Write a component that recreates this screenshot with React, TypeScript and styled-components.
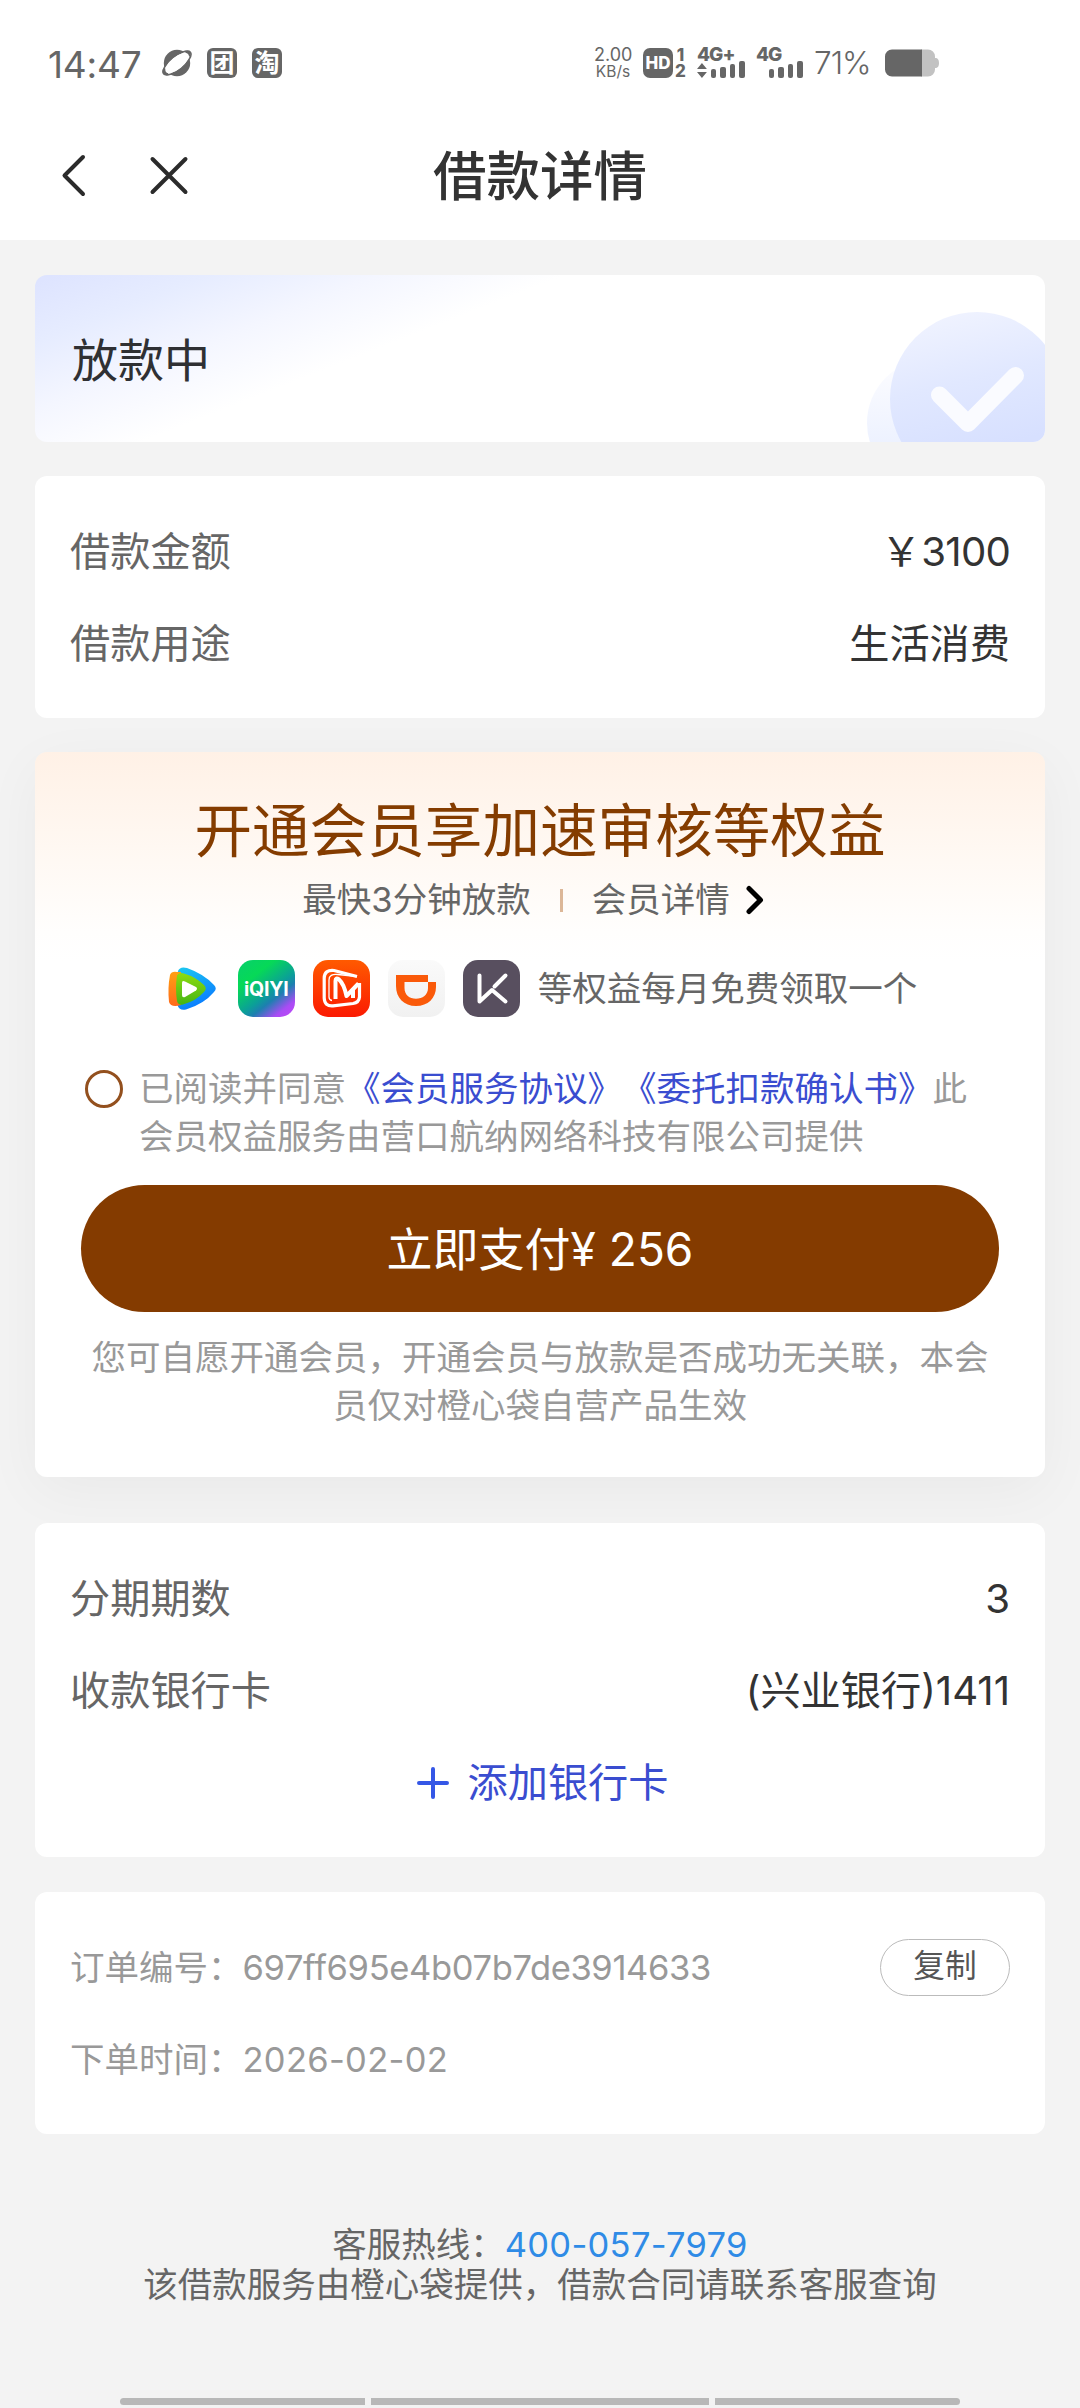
import React from "react";
import styled, { createGlobalStyle } from "styled-components";

const GlobalStyle = createGlobalStyle`
  * { box-sizing: border-box; }
  body {
    margin: 0;
    background: #f3f3f3;
    color: #333;
    font-family: Inter, "Noto Sans CJK SC", sans-serif;
    text-spacing-trim: space-all;
  }
`;

const Screen = styled.div`
  width: 1080px;
  height: 2408px;
  display: flex;
  flex-direction: column;
  overflow: hidden;
`;

const Header = styled.header`
  height: 240px;
  flex: none;
  background: #fff;
`;

const StatusBar = styled.div`
  height: 126px;
  padding: 0 141px 0 48px;
  display: flex;
  align-items: center;
  justify-content: space-between;
  color: #666;
`;

const StatusGroup = styled.div<{ $gap: number }>`
  display: flex;
  align-items: center;
  gap: ${(p) => p.$gap}px;
`;

const Clock = styled.span`
  width: 99px;
  font-size: 37px;
  line-height: 44px;
  letter-spacing: -0.2px;
  padding-top: 4px;
  white-space: nowrap;
`;

const AppBadge = styled.span`
  width: 30px;
  height: 30px;
  border-radius: 6px;
  background: #666;
  color: #fff;
  display: flex;
  align-items: center;
  justify-content: center;
  font-size: 25px;
  line-height: 30px;
  font-weight: 700;
`;

const NetSpeed = styled.div`
  width: 38px;
  text-align: center;
  display: flex;
  flex-direction: column;
  font-size: 18px;
  line-height: 17px;
  white-space: nowrap;

  span + span {
    font-size: 15.5px;
  }
`;

const HdMark = styled.div`
  display: flex;
  align-items: center;
  gap: 2px;
`;

const HdBox = styled.span`
  width: 30px;
  height: 30px;
  border-radius: 7px;
  background: #666;
  color: #fff;
  font-size: 17px;
  font-weight: 800;
  line-height: 30px;
  text-align: center;
`;

const HdSlots = styled.span`
  width: 11px;
  display: flex;
  flex-direction: column;
  font-size: 17px;
  line-height: 16px;
  font-weight: 800;
  text-align: center;
`;

const Signal = styled.div<{ $width: number }>`
  width: ${(p) => p.$width}px;
  height: 30px;
  display: flex;
  flex-direction: column;
  justify-content: space-between;
  font-size: 19px;
  line-height: 14px;
  font-weight: 800;
  letter-spacing: -1px;
`;

const SignalBars = styled.div`
  display: flex;
  align-items: flex-end;
  justify-content: flex-end;
  gap: 4px;
  height: 17px;
  margin-top: -3px;
`;

const Bar = styled.i<{ $h: number }>`
  width: 5.6px;
  height: ${(p) => p.$h}px;
  border-radius: 2px;
  background: #666;
`;

const Percent = styled.span`
  width: 60px;
  font-size: 31.5px;
  line-height: 30px;
  letter-spacing: -1px;
  font-weight: 300;
`;

const NavBar = styled.nav`
  height: 98px;
  padding: 0 58px;
  display: grid;
  grid-template-columns: 1fr auto 1fr;
  align-items: center;
`;

const NavButtons = styled.div`
  display: flex;
  align-items: center;
  gap: 58px;
`;

const IconButton = styled.button`
  border: 0;
  padding: 0;
  background: none;
  display: flex;
`;

const PageTitle = styled.h1`
  margin: 4px 0 0;
  font-size: 53.5px;
  line-height: 70px;
  font-weight: 500;
  color: #333;
`;

const Content = styled.main`
  padding: 35px 35px 0;
  display: flex;
  flex-direction: column;
`;

const Card = styled.section<{ $top?: number }>`
  margin-top: ${(p) => p.$top ?? 0}px;
  padding: 29px 35px;
  border-radius: 12px;
  background: #fff;
`;

const StatusCard = styled.section`
  height: 167px;
  border-radius: 12px;
  overflow: hidden;
  background: linear-gradient(158.5deg, #dde3ff 0%, #e6ecff 12%, #f4f6ff 24%, #fff 37%);
  display: flex;
  align-items: stretch;
  justify-content: space-between;
`;

const StatusText = styled.h2`
  margin: 0;
  padding: 0 0 0 37px;
  font-size: 46px;
  line-height: 170px;
  font-weight: 400;
  color: #2f3033;
`;

const Row = styled.div<{ $center?: boolean }>`
  height: 92px;
  padding-top: 1px;
  display: flex;
  align-items: center;
  justify-content: ${(p) => (p.$center ? "center" : "space-between")};
  font-size: 40.2px;
  line-height: 56px;
`;

const Label = styled.span`
  color: #666;
`;

const Value = styled.span`
  color: #333;
`;

const Digits = styled.span`
  letter-spacing: -0.8px;
`;

const AddCard = styled.button`
  border: 0;
  padding: 0 0 0 5px;
  background: none;
  display: flex;
  align-items: center;
  gap: 19px;
  font: inherit;
  color: #3a4dd0;
`;

const MemberCard = styled.section`
  margin-top: 34px;
  height: 725px;
  padding: 44px 46px 0;
  border-radius: 12px;
  background: linear-gradient(180deg, #fff1e6 0, #fff8f2 95px, #fffefd 180px, #fff 210px);
  box-shadow: 0 14px 58px rgba(0, 0, 0, 0.045);
  display: flex;
  flex-direction: column;
`;

const MemberTitle = styled.h2`
  margin: 0;
  font-size: 57.6px;
  line-height: 70px;
  font-weight: 400;
  color: #843c00;
  text-align: center;
`;

const MemberSub = styled.div`
  margin: 14px 0 0 -13px;
  display: flex;
  align-items: center;
  justify-content: center;
  font-size: 34.5px;
  line-height: 40px;
  color: #666;
`;

const Divider = styled.i`
  width: 3px;
  height: 23px;
  margin: 0 29px;
  background: #dcb798;
`;

const MoreLink = styled.a`
  display: flex;
  align-items: center;
  gap: 15px;
`;

const Benefits = styled.div`
  margin-top: 40px;
  height: 57px;
  display: flex;
  align-items: center;
  justify-content: center;
  gap: 18px;
  font-size: 34.5px;
  line-height: 40px;
  color: #666;
`;

const BenefitIcon = styled.span<{ $bg?: string }>`
  width: 57px;
  height: 57px;
  flex: none;
  border-radius: 15px;
  background: ${(p) => p.$bg ?? "transparent"};
  display: flex;
  align-items: center;
  justify-content: center;
  overflow: hidden;
`;

const IqiyiText = styled.span`
  color: #fff;
  font-size: 19.5px;
  font-weight: 700;
  line-height: 24px;
  letter-spacing: -0.2px;
`;

const Agreement = styled.div`
  margin: 48px 0 0 4px;
  display: flex;
  gap: 16px;
`;

const Radio = styled.span`
  width: 38px;
  height: 38px;
  flex: none;
  margin-top: 5px;
  border: 3px solid #93501e;
  border-radius: 50%;
`;

const AgreementText = styled.p`
  margin: 0;
  font-size: 34.5px;
  line-height: 48px;
  color: #999;

  a {
    color: #3a4dd0;
  }
`;

const PayButton = styled.button`
  margin-top: 24px;
  height: 127px;
  flex: none;
  border: 0;
  border-radius: 64px;
  background: #843b00;
  color: #fff;
  font-family: inherit;
  font-size: 46px;
  line-height: 60px;
`;

const Notice = styled.p`
  margin: 22px 0 0;
  font-size: 34.5px;
  line-height: 48px;
  color: #999;
  text-align: center;
`;

const OrderInfo = styled.span`
  font-size: 34.5px;
  color: #999;
`;

const OrderValue = styled.span<{ $spacing: number }>`
  letter-spacing: ${(p) => p.$spacing}px;
`;

const CopyButton = styled.button`
  width: 130px;
  height: 57px;
  padding: 0 0 3px;
  border: 1.5px solid #bbb;
  border-radius: 29px;
  background: #fff;
  font-family: inherit;
  font-size: 31.7px;
  line-height: 40px;
  color: #555;
`;

const Footer = styled.footer`
  margin-top: 91px;
  font-size: 34.5px;
  line-height: 40px;
  color: #666;
  text-align: center;
  white-space: nowrap;

  a {
    color: #2f8be6;
    letter-spacing: 0.3px;
  }
`;

const GestureBar = styled.div`
  margin: auto 120px 3px;
  display: grid;
  grid-template-columns: 245px 338px 245px;
  justify-content: space-between;
`;

const Grip = styled.i<{ $radius: string }>`
  height: 7px;
  border-radius: ${(p) => p.$radius};
  background: #b8b8b8;
`;

function PlanetIcon() {
  return (
    <svg width="30" height="30" viewBox="0 0 30 30">
      <circle cx="15" cy="15" r="13.2" fill="#666" />
      <ellipse cx="15" cy="15" rx="17.2" ry="6.6" transform="rotate(-39 15 15)" fill="#fff" stroke="#666" strokeWidth="1.6" />
      <path d="M1 21C0 25 1 28 7 27L3 20ZM22 3C27 2 30 3 28 9Z" fill="#666" />
      <ellipse cx="15" cy="15" rx="14.2" ry="6" transform="rotate(-39 15 15)" fill="#fff" />
    </svg>
  );
}

function BatteryIcon() {
  return (
    <svg width="54" height="28" viewBox="0 0 54 28">
      <path d="M36 .5H43a7 7 0 0 1 7 7V9c3 0 4 2 4 5s-1 5-4 5v1.500a7 7 0 0 1-7 7H36Z" fill="#c2c2c2" />
      <path d="M37 .5H7a7 7 0 0 0-7 7v13a7 7 0 0 0 7 7H37Z" fill="#666" />
    </svg>
  );
}

function DataArrows() {
  return (
    <svg width="10" height="15" viewBox="0 0 10 15">
      <path d="M5 0 10 6H0ZM5 15 0 9H10Z" fill="#666" />
    </svg>
  );
}

function CheckArt() {
  return (
    <svg width="180" height="167" viewBox="865 275 180 167">
      <defs>
        <linearGradient id="disc" x1="0.3" y1="0" x2="0.55" y2="1">
          <stop offset="0" stopColor="#f0f3ff" />
          <stop offset="0.4" stopColor="#e1e8ff" />
          <stop offset="0.8" stopColor="#d7e0ff" />
        </linearGradient>
        <linearGradient id="halo" x1="0" y1="0" x2="0" y2="1">
          <stop offset="0" stopColor="#fdfdff" />
          <stop offset="0.7" stopColor="#ecf1ff" />
        </linearGradient>
      </defs>
      <circle cx="931.5" cy="423" r="64.500" fill="url(#halo)" />
      <circle cx="977" cy="399" r="87" fill="url(#disc)" />
      <path d="M939.500 395 968 423.500 1015.500 375.500" fill="none" stroke="#fafbff" strokeWidth="17" strokeLinecap="round" strokeLinejoin="round" />
    </svg>
  );
}

function TencentVideoIcon() {
  return (
    <svg width="57" height="57" viewBox="0 0 57 57">
      <defs>
        <linearGradient id="tvBlue" x1="0" y1="0" x2="0.4" y2="1">
          <stop offset="0" stopColor="#1ccaf0" />
          <stop offset="1" stopColor="#0a7cff" />
        </linearGradient>
        <linearGradient id="tvOrange" x1="0" y1="0" x2="0" y2="1">
          <stop offset="0" stopColor="#ffa012" />
          <stop offset="1" stopColor="#ff6a1c" />
        </linearGradient>
        <linearGradient id="tvGreen" x1="0" y1="0" x2="0" y2="1">
          <stop offset="0" stopColor="#8ddc10" />
          <stop offset="1" stopColor="#45b516" />
        </linearGradient>
      </defs>
      <path d="M15 11Q17 6 24 8Q41 14 51 25Q54.500 28.500 51 32Q41 44 23 49.500Q16 51 14.500 45Q12 28 15 11Z" fill="url(#tvBlue)" />
      <path d="M7 15Q8.500 11 14 12H18V45Q8 48 6 42Q4.500 28 7 15Z" fill="url(#tvOrange)" />
      <path d="M14 15.500Q16 12 21 13.500Q33 17 41 25Q44.500 28.500 41 32Q33 41 20 44.500Q15 45.500 14 41Q12 28 14 15.500Z" fill="url(#tvGreen)" />
      <path d="M19 23Q19 20 22 21.500L33 27Q35 28.700 33 30.500L22 37Q19 38 19 35Z" fill="#fff" />
    </svg>
  );
}

function MangoIcon() {
  return (
    <svg width="57" height="57" viewBox="0 0 57 57" fill="none" stroke="#fff" strokeLinejoin="round">
      <path d="M44 16.500 21 10.500Q11.500 9.500 11.200 18V38Q11.500 46.500 20 45.800L40 43.500Q46 42.500 46.500 37V23" strokeWidth="3.200" />
      <path d="M44 16.500 25 14.500Q16 13.500 16 20V37Q16 40 19 40.500" strokeWidth="1.300" />
      <path d="M22.500 39V21Q22.500 17 26 19.500Q31 24 33.500 36L45.500 23.500M40 29V38" strokeWidth="4" />
    </svg>
  );
}

function DidiIcon() {
  return (
    <svg width="57" height="57" viewBox="0 0 57 57">
      <path
        fillRule="evenodd"
        fill="#fa5a0a"
        d="M8 15H40V22H48V27C48 38 40 46 28 46S8 38 8 26ZM16.500 22V28C16.500 35 21.500 38.700 28 38.700S40 35 40 28V22Z"
      />
    </svg>
  );
}

function KeepIcon() {
  return (
    <svg width="57" height="57" viewBox="0 0 57 57" fill="none" stroke="#fff" strokeWidth="4" strokeLinecap="round" strokeLinejoin="round">
      <path d="M16.500 15.500V41.500L29 30 42.500 41.500M42.500 15.500 31.500 26.500" />
    </svg>
  );
}

export default function App() {
  return (
    <Screen>
      <GlobalStyle />
      <Header>
        <StatusBar>
          <StatusGroup $gap={15}>
            <Clock>14:47</Clock>
            <PlanetIcon />
            <AppBadge>团</AppBadge>
            <AppBadge>淘</AppBadge>
          </StatusGroup>
          <StatusGroup $gap={11}>
            <NetSpeed>
              <span>2.00</span>
              <span>KB/s</span>
            </NetSpeed>
            <HdMark>
              <HdBox>HD</HdBox>
              <HdSlots>
                <span>1</span>
                <span>2</span>
              </HdSlots>
            </HdMark>
            <Signal $width={48}>
              <span>4G+</span>
              <SignalBars>
                <DataArrows />
                <Bar $h={9} />
                <Bar $h={11} />
                <Bar $h={14} />
                <Bar $h={17} />
              </SignalBars>
            </Signal>
            <Signal $width={47}>
              <span>4G</span>
              <SignalBars>
                <Bar $h={9} />
                <Bar $h={11} />
                <Bar $h={14} />
                <Bar $h={17} />
              </SignalBars>
            </Signal>
            <Percent>71%</Percent>
            <BatteryIcon />
          </StatusGroup>
        </StatusBar>
        <NavBar>
          <NavButtons>
            <IconButton aria-label="返回">
              <svg width="32" height="44" viewBox="0 0 32 44" fill="none" stroke="#2b2b2b" strokeWidth="4" strokeLinecap="round" strokeLinejoin="round">
                <path d="M25 4 6.500 22.500 25 41" />
              </svg>
            </IconButton>
            <IconButton aria-label="关闭">
              <svg width="42" height="44" viewBox="0 0 42 44" fill="none" stroke="#2b2b2b" strokeWidth="4" strokeLinecap="round">
                <path d="M4.500 6 37.500 39M37.500 6 4.500 39" />
              </svg>
            </IconButton>
          </NavButtons>
          <PageTitle>借款详情</PageTitle>
        </NavBar>
      </Header>

      <Content>
        <StatusCard>
          <StatusText>放款中</StatusText>
          <CheckArt />
        </StatusCard>

        <Card $top={34}>
          <Row>
            <Label>借款金额</Label>
            <Value>
              {"\uFFE5"}
              <Digits>3100</Digits>
            </Value>
          </Row>
          <Row>
            <Label>借款用途</Label>
            <Value>生活消费</Value>
          </Row>
        </Card>

        <MemberCard>
          <MemberTitle>开通会员享加速审核等权益</MemberTitle>
          <MemberSub>
            <span>最快3分钟放款</span>
            <Divider />
            <MoreLink>
              会员详情
              <svg width="20" height="30" viewBox="0 0 20 30" fill="none" stroke="#000" strokeWidth="5" strokeLinecap="round" strokeLinejoin="round">
                <path d="M4 3.500 15.500 15 4 26.500" />
              </svg>
            </MoreLink>
          </MemberSub>
          <Benefits>
            <BenefitIcon>
              <TencentVideoIcon />
            </BenefitIcon>
            <BenefitIcon $bg="linear-gradient(142deg, #08cf6c 0%, #06d957 28%, #0b9f98 56%, #1d7fb0 66%, #a94cf5 84%, #c347f7 100%)">
              <IqiyiText>iQIYI</IqiyiText>
            </BenefitIcon>
            <BenefitIcon $bg="linear-gradient(180deg, #ff5a00, #fb1a02)">
              <MangoIcon />
            </BenefitIcon>
            <BenefitIcon $bg="linear-gradient(180deg, #fafafa, #f1f1f1)">
              <DidiIcon />
            </BenefitIcon>
            <BenefitIcon $bg="#584f5f">
              <KeepIcon />
            </BenefitIcon>
            <span>等权益每月免费领取一个</span>
          </Benefits>
          <Agreement>
            <Radio />
            <AgreementText>
              已阅读并同意<a>《会员服务协议》《委托扣款确认书》</a>此会员权益服务由营口航纳网络科技有限公司提供
            </AgreementText>
          </Agreement>
          <PayButton>立即支付¥ 256</PayButton>
          <Notice>
            {"您可自愿开通会员\uFF0C开通会员与放款是否成功无关联\uFF0C本会员仅对橙心袋自营产品生效"}
          </Notice>
        </MemberCard>

        <Card $top={46}>
          <Row>
            <Label>分期期数</Label>
            <Value>3</Value>
          </Row>
          <Row>
            <Label>收款银行卡</Label>
            <Value>(兴业银行)1411</Value>
          </Row>
          <Row $center>
            <AddCard>
              <svg width="32" height="34" viewBox="0 0 32 34" stroke="#3557e6" strokeWidth="4" strokeLinecap="round">
                <path d="M16 3V31M2 17H30" />
              </svg>
              添加银行卡
            </AddCard>
          </Row>
        </Card>

        <Card $top={35}>
          <Row>
            <OrderInfo>
              {"订单编号\uFF1A"}
              <OrderValue $spacing={-0.35}>697ff695e4b07b7de3914633</OrderValue>
            </OrderInfo>
            <CopyButton>复制</CopyButton>
          </Row>
          <Row>
            <OrderInfo>
              {"下单时间\uFF1A"}
              <OrderValue $spacing={0.3}>2026-02-02</OrderValue>
            </OrderInfo>
          </Row>
        </Card>

        <Footer>
          <div>
            {"客服热线\uFF1A"}
            <a>400-057-7979</a>
          </div>
          <div>{"该借款服务由橙心袋提供\uFF0C借款合同请联系客服查询"}</div>
        </Footer>
      </Content>

      <GestureBar>
        <Grip $radius="4px 0 0 4px" />
        <Grip $radius="0" />
        <Grip $radius="0 4px 4px 0" />
      </GestureBar>
    </Screen>
  );
}
